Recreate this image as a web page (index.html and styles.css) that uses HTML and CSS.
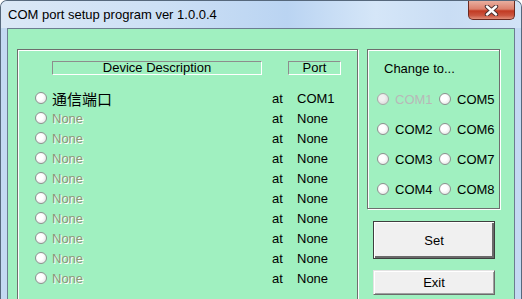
FILE: index.html
```
<!DOCTYPE html>
<html>
  <head>
    <meta charset="UTF-8">
    <title>COM port setup program</title>
    <link rel="stylesheet" href="styles.css">
  </head>
  <body>
    <div class="window">
      <div class="titlebar">
        <span class="title">COM port setup program ver 1.0.0.4</span>
        <div class="close">
          <svg width="17" height="11" viewBox="0 0 17 11">
            <path d="M4 1.5 L13 9.5 M13 1.5 L4 9.5" stroke="#4a3030" stroke-width="4.4" stroke-linecap="round"/>
            <path d="M4 1.5 L13 9.5 M13 1.5 L4 9.5" stroke="#ffffff" stroke-width="2.4" stroke-linecap="round"/>
          </svg>
        </div>
      </div>
      <div class="client">
        <div class="group devices">
          <div class="header">
            <div class="head-desc">Device Description</div>
            <div class="head-port">Port</div>
          </div>
          <div class="rows">
            <div class="row"><span class="radio"></span><span class="desc cjk">通信端口</span><span class="at">at</span><span class="port">COM1</span></div>
            <div class="row"><span class="radio"></span><span class="desc off">None</span><span class="at">at</span><span class="port">None</span></div>
            <div class="row"><span class="radio"></span><span class="desc off">None</span><span class="at">at</span><span class="port">None</span></div>
            <div class="row"><span class="radio"></span><span class="desc off">None</span><span class="at">at</span><span class="port">None</span></div>
            <div class="row"><span class="radio"></span><span class="desc off">None</span><span class="at">at</span><span class="port">None</span></div>
            <div class="row"><span class="radio"></span><span class="desc off">None</span><span class="at">at</span><span class="port">None</span></div>
            <div class="row"><span class="radio"></span><span class="desc off">None</span><span class="at">at</span><span class="port">None</span></div>
            <div class="row"><span class="radio"></span><span class="desc off">None</span><span class="at">at</span><span class="port">None</span></div>
            <div class="row"><span class="radio"></span><span class="desc off">None</span><span class="at">at</span><span class="port">None</span></div>
            <div class="row"><span class="radio"></span><span class="desc off">None</span><span class="at">at</span><span class="port">None</span></div>
          </div>
        </div>
        <div class="side">
          <div class="group change">
            <div class="change-title">Change to...</div>
            <div class="choices">
              <div class="choice disabled"><span class="radio"></span>COM1</div>
              <div class="choice"><span class="radio"></span>COM5</div>
              <div class="choice"><span class="radio"></span>COM2</div>
              <div class="choice"><span class="radio"></span>COM6</div>
              <div class="choice"><span class="radio"></span>COM3</div>
              <div class="choice"><span class="radio"></span>COM7</div>
              <div class="choice"><span class="radio"></span>COM4</div>
              <div class="choice"><span class="radio"></span>COM8</div>
            </div>
          </div>
          <button class="btn set" type="button">Set</button>
          <button class="btn exit" type="button">Exit</button>
        </div>
      </div>
    </div>
  </body>
</html>
```
FILE: styles.css
```
body {
  margin: 0;
  font-family: "Liberation Sans", Arial, sans-serif;
}
.window {
  width: 522px;
  height: 299px;
  box-sizing: border-box;
  border: 1px solid #56687c;
  border-bottom: none;
  border-radius: 7px 7px 0 0;
  background: #c3d9f2;
  display: flex;
  flex-direction: column;
  overflow: hidden;
}
.titlebar {
  height: 27px;
  flex: none;
  display: flex;
  justify-content: space-between;
  align-items: flex-start;
  padding: 0 6px 0 7px;
  background: linear-gradient(to right, #dbe8f6 0%, #cde0f5 30%, #bad4f2 55%, #d5e6f8 72%, #c9ddf4 86%, #d2e3f6 100%);
}
.title {
  font-size: 13px;
  line-height: 28px;
  color: #000;
}
.close {
  width: 45px;
  height: 18px;
  border: 1px solid #6b2a20;
  border-top: none;
  border-radius: 0 0 5px 5px;
  background: linear-gradient(#e9ae9f 0%, #dc806c 45%, #c23a22 55%, #cb553f 80%, #e08d78 100%);
  display: flex;
  align-items: center;
  justify-content: center;
}
.client {
  flex: 1;
  margin: 0 6px;
  border: 1px solid #6b7d90;
  border-bottom: none;
  background: #a0f0c0;
  display: flex;
  align-items: flex-start;
  padding: 20px 0 0 9px;
  font-size: 13px;
  color: #000;
}
.group {
  border: 1px solid #6e6e6e;
  box-shadow: inset 1px 1px 0 #fff, 1px 1px 0 #fff;
  box-sizing: border-box;
}
.devices {
  width: 341px;
  height: 270px;
  flex: none;
  padding-top: 11px;
}
.header {
  display: flex;
  margin-left: 34px;
}
.head-desc,
.head-port {
  height: 14px;
  box-sizing: border-box;
  border: 1px solid;
  border-color: #8d8d8d #fff #fff #8d8d8d;
  text-align: center;
  line-height: 12px;
}
.head-desc {
  width: 210px;
}
.head-port {
  width: 53px;
  margin-left: 26px;
}
.rows {
  margin-top: 13px;
  padding-left: 17px;
}
.row {
  display: flex;
  align-items: center;
  height: 20px;
}
.radio {
  flex: none;
  width: 12px;
  height: 12px;
  box-sizing: border-box;
  border-radius: 50%;
  border: 1px solid #8e9090;
  background: radial-gradient(circle at 40% 40%, #fff 35%, #dcdcdc 100%);
  margin-right: 5px;
}
.desc {
  width: 220px;
}
.cjk {
  font-family: "Noto Sans CJK SC", sans-serif;
  font-size: 15px;
  color: #000;
}
.off {
  color: #8f9478;
  text-shadow: 1px 1px 0 #fff;
}
.at {
  width: 25px;
}
.side {
  flex: none;
  width: 133px;
  margin-left: 9px;
  display: flex;
  flex-direction: column;
}
.change {
  height: 160px;
  padding: 11px 0 0 9px;
}
.change-title {
  margin-left: 7px;
  line-height: 15px;
}
.choices {
  display: grid;
  grid-template-columns: 62px 62px;
  grid-auto-rows: 30px;
  margin-top: 8px;
}
.choice {
  display: flex;
  align-items: center;
}
.choice .radio {
  margin-right: 6px;
}
.choice.disabled {
  color: #b8b8b8;
}
.choice.disabled .radio {
  background: radial-gradient(circle at 40% 40%, #f0f0f0 30%, #d0d0d0 100%);
  border-color: #a8a8a8;
}
.btn {
  width: 122px;
  height: 38px;
  margin-left: 6px;
  padding: 0;
  font: 13px "Liberation Sans", Arial, sans-serif;
  color: #000;
  background: #f0f0f0;
}
.set {
  margin-top: 12px;
  border: 1px solid #3e3e3e;
  box-shadow: inset 1px 1px 0 #fff, inset -2px -2px 0 #6a6a6a;
}
.exit {
  height: 25px;
  margin-top: 11px;
  border: 1px solid;
  border-color: #e3e3e3 #6a6a6a #6a6a6a #e3e3e3;
  box-shadow: inset 1px 1px 0 #fff, inset -1px -1px 0 #a0a0a0;
}
```
